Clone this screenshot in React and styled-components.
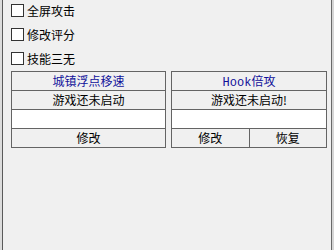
import React from "react";
import styled, { createGlobalStyle } from "styled-components";

const GlobalStyle = createGlobalStyle`
  *, *::before, *::after {
    box-sizing: border-box;
  }
  html, body {
    margin: 0;
    padding: 0;
    background: #f0f0f0;
  }
  body {
    font-family: "Noto Sans CJK SC", "Liberation Sans", sans-serif;
    font-size: 12px;
    color: #000;
  }
`;

const Window = styled.div`
  display: flex;
  width: 334px;
  height: 250px;
  overflow: hidden;
`;

const LeftEdge = styled.div`
  width: 3px;
  background: #dcdcdc;
  border-right: 1px solid #5a5a5a;
`;

const RightEdge = styled.div`
  width: 3px;
  background: #d6d6d6;
  border-left: 1px solid #6a6a6a;
`;

const Content = styled.div`
  flex: 1;
  padding: 4px 0 0 8px;
  display: flex;
  flex-direction: column;
`;

const Checks = styled.div`
  display: flex;
  flex-direction: column;
  gap: 11px;
`;

const CheckRow = styled.label`
  display: flex;
  align-items: center;
  height: 13px;
  gap: 3px;
  line-height: 13px;
`;

const Box = styled.span`
  width: 13px;
  height: 13px;
  border: 1px solid #333;
  background: #fff;
  flex: none;
`;

const Panels = styled.div`
  display: flex;
  gap: 5px;
  margin-top: 6px;
`;

const Panel = styled.div`
  width: ${(p) => p.$w}px;
  border: 1px solid #646464;
  display: flex;
  flex-direction: column;
`;

const Cell = styled.div`
  height: 19px;
  line-height: 18px;
  text-align: center;
  white-space: nowrap;
  background: ${(p) => (p.$input ? "#fff" : "#f0f0f0")};
  color: ${(p) => (p.$title ? "#10109a" : "#000")};
  &:first-child {
    height: 18px;
  }
  & + & {
    border-top: 1px solid #646464;
  }
`;

const Mono = styled.span`
  font-family: "Liberation Mono", "DejaVu Sans Mono", monospace;
  font-size: 12px;
`;

const Split = styled.div`
  display: flex;
  height: 19px;
  border-top: 1px solid #646464;
`;

const SplitButton = styled.div`
  flex: 1;
  line-height: 18px;
  text-align: center;
  & + & {
    border-left: 1px solid #646464;
  }
`;

const options = ["全屏攻击", "修改评分", "技能三无"];

export default function App() {
  return (
    <>
      <GlobalStyle />
      <Window>
        <LeftEdge />
        <Content>
          <Checks>
            {options.map((o) => (
              <CheckRow key={o}>
                <Box />
                {o}
              </CheckRow>
            ))}
          </Checks>
          <Panels>
            <Panel $w={155}>
              <Cell $title>城镇浮点移速</Cell>
              <Cell>游戏还未启动</Cell>
              <Cell $input />
              <Cell>修改</Cell>
            </Panel>
            <Panel $w={156}>
              <Cell $title>
                <Mono>Hook</Mono>倍攻
              </Cell>
              <Cell>游戏还未启动!</Cell>
              <Cell $input />
              <Split>
                <SplitButton>修改</SplitButton>
                <SplitButton>恢复</SplitButton>
              </Split>
            </Panel>
          </Panels>
        </Content>
        <RightEdge />
      </Window>
    </>
  );
}
